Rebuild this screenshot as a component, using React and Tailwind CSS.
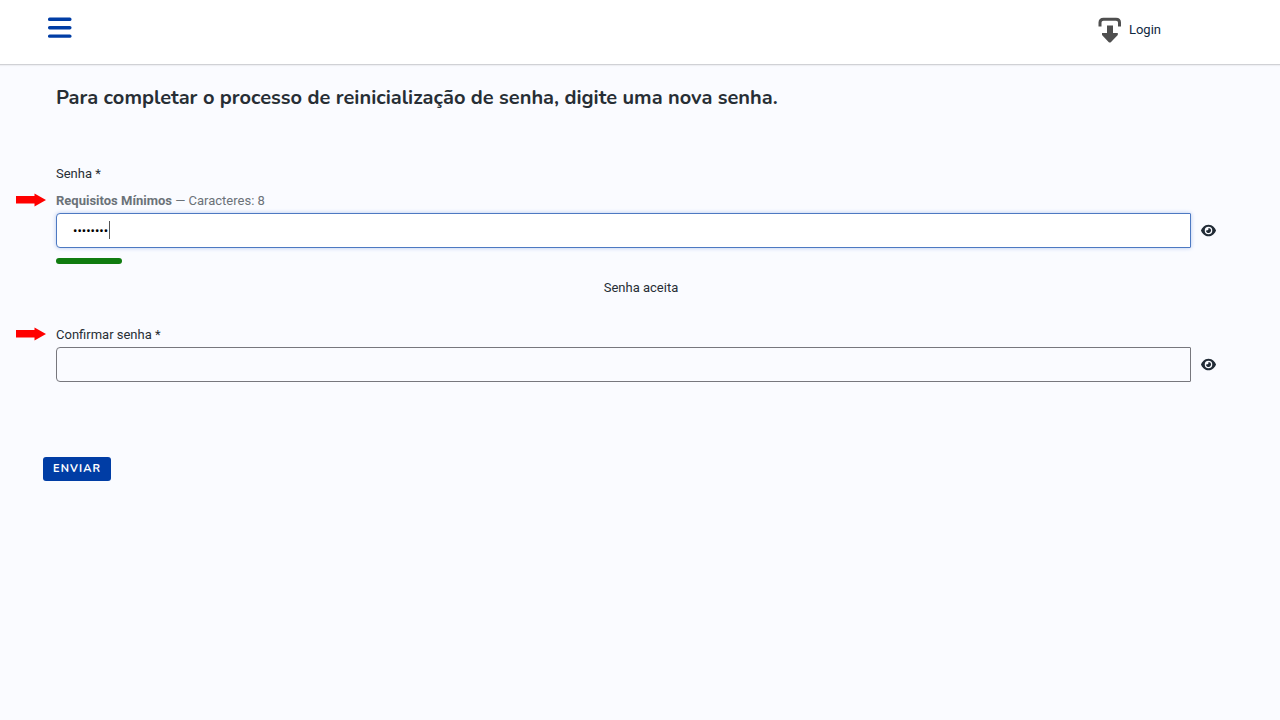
import { useState } from "react";
import { FaEye } from "react-icons/fa6";

function MenuIcon() {
  return (
    <svg width="24" height="22" viewBox="0 0 24 22" fill="#003da5" aria-hidden="true">
      <rect x="0" y="0.6" width="23.5" height="3.4" rx="1.6" />
      <rect x="0" y="9" width="23.5" height="3.4" rx="1.6" />
      <rect x="0" y="17.400" width="23.5" height="3.4" rx="1.6" />
    </svg>
  );
}

function LoginIcon() {
  return (
    <svg width="24" height="26" viewBox="0 0 24 26" aria-hidden="true">
      <path d="M2 9.500V5.500Q2 2.200 5.500 2.200H18Q21.500 2.200 21.500 5.500V9.500" fill="none" stroke="#4f4f4f" strokeWidth="3" />
      <path d="M9 8.500H15V16H19.800V18L12.800 25.200Q11.800 26 10.800 25.200L4 18V16H9Z" fill="#4f4f4f" />
    </svg>
  );
}

function Arrow() {
  return (
    <svg width="30" height="14" viewBox="0 0 30 14" fill="#ff0000" className="shrink-0 mt-[3px]" aria-hidden="true">
      <path d="M0 3H18.500V0.500L30 7L18.500 13.500V10.500H0Z" />
    </svg>
  );
}

function PasswordField({ id, value, onChange, active, describedBy }) {
  const [visible, setVisible] = useState(false);

  return (
    <div className="flex items-center">
      <div className="relative flex-1">
        <input
          id={id}
          type={visible ? "text" : "password"}
          value={value}
          onChange={e => onChange(e.target.value)}
          aria-describedby={describedBy}
          autoComplete="new-password"
          className={`block w-full h-[35px] pl-4 pr-3 rounded-l-[4px] rounded-r-[1px] border text-[13px] text-black outline-none
            ${active ? "bg-white border-[#4d79c2] shadow-[0_0_4px_#b5c8ee] caret-transparent" : "bg-[#fafbff] border-[#77777d]"}`}
        />
        {active && <span className="absolute left-[53px] top-2 w-px h-[18px] bg-[#555555]" />}
      </div>
      <button type="button" aria-label="Mostrar senha" onClick={() => setVisible(!visible)}
        className="w-[35px] h-[35px] flex items-center justify-center text-[#212b36]">
        <FaEye size={15} />
      </button>
    </div>
  );
}

export default function App() {
  const [password, setPassword] = useState("abcd1234");
  const [confirm, setConfirm] = useState("");

  return (
    <div className="min-h-screen bg-[#fafbff] font-['Roboto',sans-serif] text-[13px] leading-[22px] text-[#272e35]">
      <header className="h-[65px] bg-white border-b border-[#d0d1d5] shadow-[0_1px_1px_#eeeff3] flex items-start justify-between pl-12 pr-[119px] pt-[17px]">
        <button type="button" aria-label="Menu">
          <MenuIcon />
        </button>
        <a href="#login" className="flex items-center gap-[7px] text-[#10293f]">
          <LoginIcon />
          Login
        </a>
      </header>

      <main className="pl-4 pr-[54px] pt-[19px]">
        <h1 className="pl-10 text-xl leading-7 font-bold font-['Nunito','Lato',sans-serif]">
          Para completar o processo de reinicialização de senha, digite uma nova senha.
        </h1>

        <form onSubmit={e => e.preventDefault()} className="mt-[51px]">
          <label htmlFor="password" className="block pl-10">Senha *</label>
          <div className="mt-[5px] flex items-start gap-[10px]">
            <Arrow />
            <p id="requirements" className="text-[#6b7278]">
              <strong className="font-bold">Requisitos Mínimos</strong> — Caracteres: 8
            </p>
          </div>

          <div className="pl-10 mt-px">
            <PasswordField id="password" value={password} onChange={setPassword} describedBy="requirements" active />
            <div className="mt-[10px] w-[66px] h-[6px] rounded-full bg-[#107c10]" />
            <p className="mt-[13px] text-center">Senha aceita</p>
          </div>

          <div className="mt-[25px] flex items-start gap-[10px]">
            <Arrow />
            <label htmlFor="confirm">Confirmar senha *</label>
          </div>
          <div className="pl-10 mt-px">
            <PasswordField id="confirm" value={confirm} onChange={setConfirm} />
          </div>

          <button type="submit"
            className="ml-[27px] mt-[75px] h-6 px-[10px] rounded-[3px] bg-[#003da5] text-white text-[11px] font-bold tracking-widest font-['Nunito','Lato',sans-serif]">
            ENVIAR
          </button>
        </form>
      </main>
    </div>
  );
}
